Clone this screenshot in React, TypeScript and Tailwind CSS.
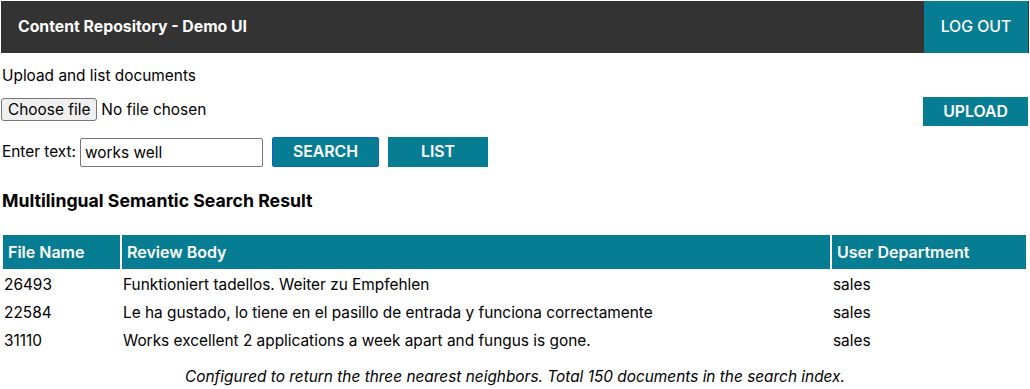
import React from "react";

const rows = [
  ["26493", "Funktioniert tadellos. Weiter zu Empfehlen", "sales"],
  ["22584", "Le ha gustado, lo tiene en el pasillo de entrada y funciona correctamente", "sales"],
  ["31110", "Works excellent 2 applications a week apart and fungus is gone.", "sales"],
];

export default function App() {
  return (
    <div className="min-h-[389px] bg-white p-px text-[15.4px] text-black" style={{ fontFamily: "Inter, 'Noto Sans', sans-serif" }}>
      <header className="flex h-[52px] items-stretch bg-[#333333] pr-[1px]">
        <div className="flex flex-1 items-center pl-[17px] text-[15.8px] font-bold text-white">Content Repository - Demo UI</div>
        <button className="w-[104px] bg-[#077d94] text-[15.8px] font-medium text-white">LOG OUT</button>
      </header>
      <div className="mt-[13px] pl-px leading-[20px]">Upload and list documents</div>
      <div className="mt-[12px] flex items-start pr-px">
        <div className="flex items-center">
          <span className="flex h-[23px] items-center rounded-[3px] border border-[#767676] bg-[#efefef] px-[6px]">Choose file</span>
          <span className="ml-[4px]">No file chosen</span>
        </div>
        <div className="flex-1" />
        <button className="mt-[-1px] h-[29px] w-[105px] bg-[#077d94] text-[15.8px] font-semibold text-white">UPLOAD</button>
      </div>
      <div className="mt-[11px] flex items-center pl-px">
        <span>Enter text:</span>
        <input
          readOnly
          value="works well"
          className="ml-[4px] h-[29px] w-[183px] rounded-[2px] border border-[#767676] px-[4px] text-[15.4px] outline-none"
        />
        <button className="ml-[9px] h-[30px] w-[107px] rounded-[2px] border border-[#0a5fd4] bg-[#077d94] text-[15.8px] font-semibold text-white">SEARCH</button>
        <button className="ml-[9px] h-[30px] w-[100px] bg-[#077d94] text-[15.8px] font-semibold text-white">LIST</button>
      </div>
      <h2 className="mt-[23px] pl-px text-[17.7px] font-bold leading-[22px]">Multilingual Semantic Search Result</h2>
      <table className="mt-[21px] w-[1027px] border-separate border-spacing-[2px] text-left">
        <thead>
          <tr className="bg-[#077d94] text-white">
            <th className="h-[34px] w-[117px] px-[5px] text-[16px] font-semibold">File Name</th>
            <th className="h-[34px] px-[5px] text-[16px] font-semibold">Review Body</th>
            <th className="h-[34px] w-[194px] px-[5px] text-[16px] font-semibold">User Department</th>
          </tr>
        </thead>
        <tbody>
          {rows.map((r) => (
            <tr key={r[0]}>
              {r.map((c, i) => (
                <td key={i} className="h-[26px] px-px pt-[2px] leading-[20px]">{c}</td>
              ))}
            </tr>
          ))}
        </tbody>
      </table>
      <p className="mt-[10px] text-center italic">Configured to return the three nearest neighbors. Total 150 documents in the search index.</p>
    </div>
  );
}
